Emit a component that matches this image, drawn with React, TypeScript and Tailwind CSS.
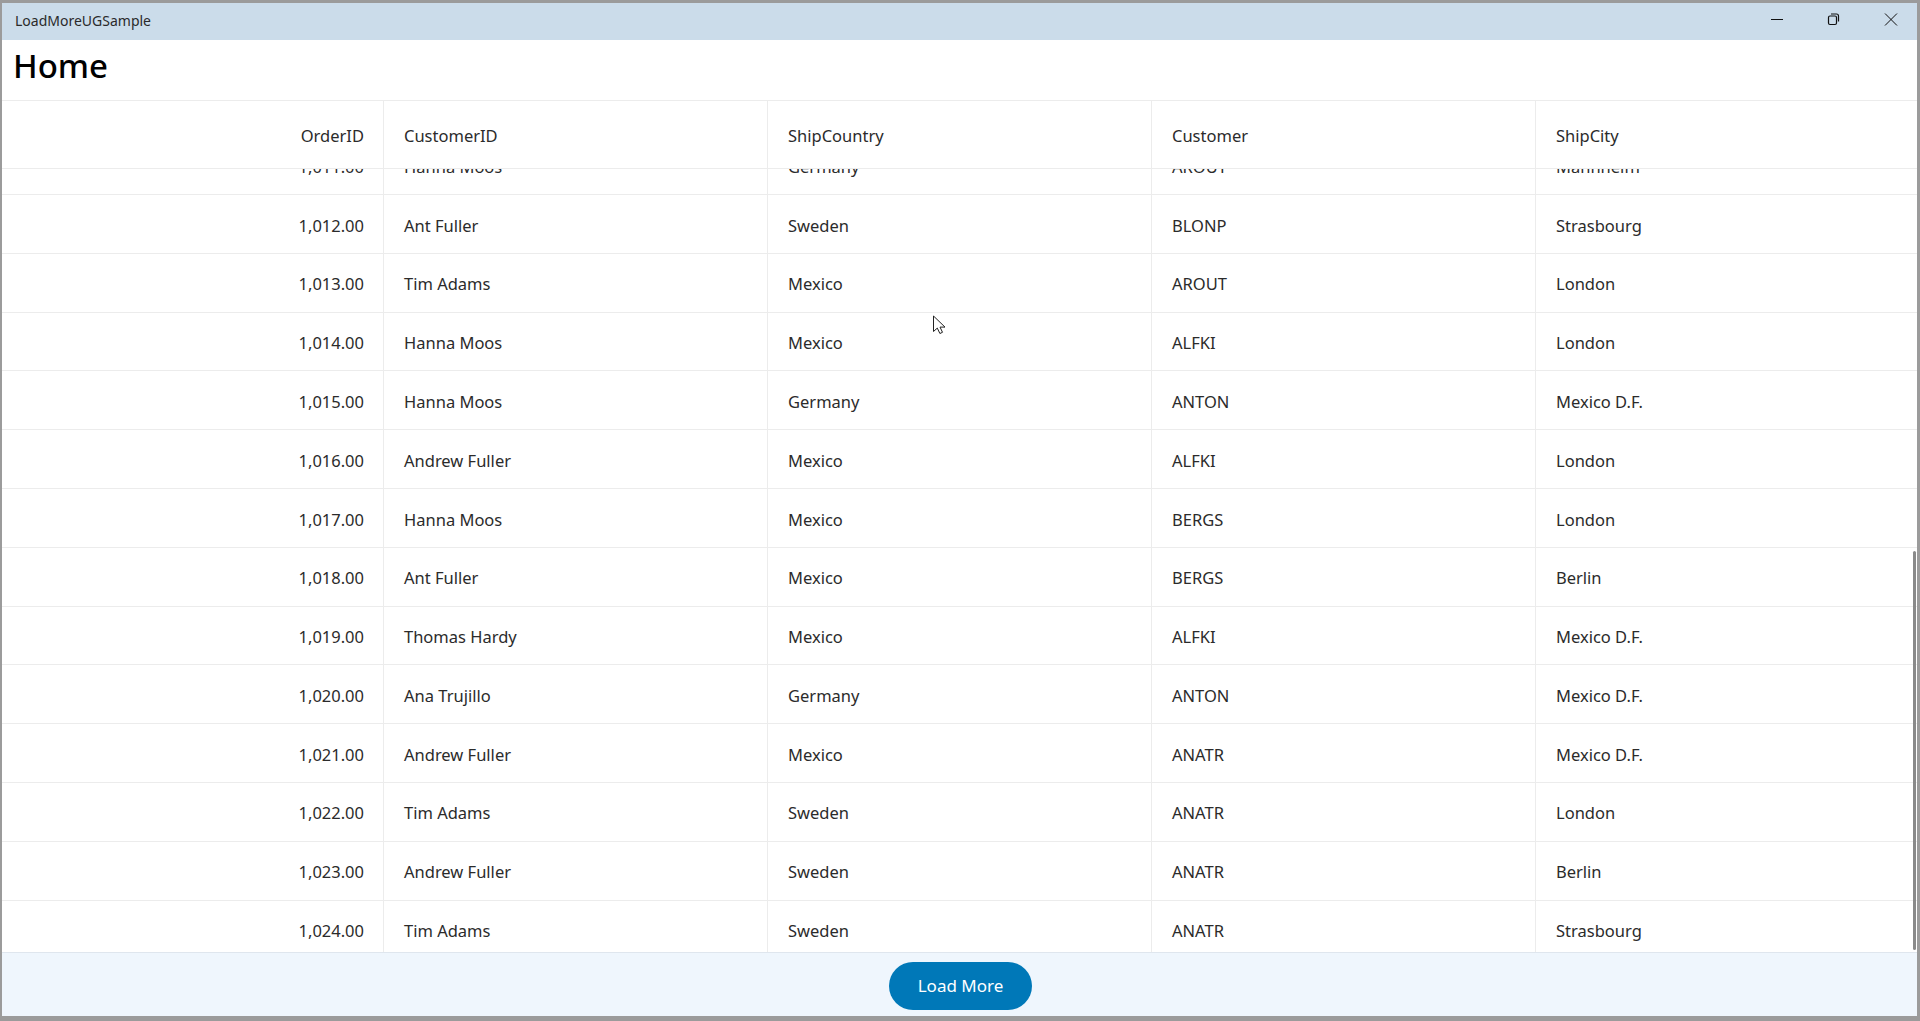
import React from 'react';

const rows = [
  ['1,011.00', 'Hanna Moos', 'Germany', 'AROUT', 'Mannheim'],
  ['1,012.00', 'Ant Fuller', 'Sweden', 'BLONP', 'Strasbourg'],
  ['1,013.00', 'Tim Adams', 'Mexico', 'AROUT', 'London'],
  ['1,014.00', 'Hanna Moos', 'Mexico', 'ALFKI', 'London'],
  ['1,015.00', 'Hanna Moos', 'Germany', 'ANTON', 'Mexico D.F.'],
  ['1,016.00', 'Andrew Fuller', 'Mexico', 'ALFKI', 'London'],
  ['1,017.00', 'Hanna Moos', 'Mexico', 'BERGS', 'London'],
  ['1,018.00', 'Ant Fuller', 'Mexico', 'BERGS', 'Berlin'],
  ['1,019.00', 'Thomas Hardy', 'Mexico', 'ALFKI', 'Mexico D.F.'],
  ['1,020.00', 'Ana Trujillo', 'Germany', 'ANTON', 'Mexico D.F.'],
  ['1,021.00', 'Andrew Fuller', 'Mexico', 'ANATR', 'Mexico D.F.'],
  ['1,022.00', 'Tim Adams', 'Sweden', 'ANATR', 'London'],
  ['1,023.00', 'Andrew Fuller', 'Sweden', 'ANATR', 'Berlin'],
  ['1,024.00', 'Tim Adams', 'Sweden', 'ANATR', 'Strasbourg'],
];

const headers = ['OrderID', 'CustomerID', 'ShipCountry', 'Customer', 'ShipCity'];

const Row: React.FC<{ cells: string[]; header?: boolean }> = ({ cells, header }) => (
  <div
    className={`grid grid-cols-[382px_384px_384px_384px_1fr] border-b border-[#ececec] shrink-0 ${
      header ? 'h-[68px]' : 'h-[58.8px]'
    }`}
  >
    {cells.map((c, i) => (
      <div
        key={i}
        className={`flex items-center pt-[4px] ${i === 0 ? 'justify-end pr-[19px]' : 'pl-5'} ${
          i < 4 ? 'border-r border-[#ececec]' : ''
        }`}
      >
        {c}
      </div>
    ))}
  </div>
);

export default function App() {
  return (
    <div className="w-[1920px] h-[1021px] overflow-hidden bg-[#9b9b9b] pt-[3px] pl-[2px] pr-[3px] pb-[5px] font-['Noto_Sans',sans-serif] text-[16.5px] text-[#2b2b2b]">
      <div className="h-full flex flex-col bg-white">
        <div className="h-[37px] shrink-0 bg-[#cbdcea] flex items-center justify-between">
          <span className="pl-[13px] pb-[2px] text-[14px] text-[#2a2a2a]">LoadMoreUGSample</span>
          <div className="flex items-center gap-[33px] pr-[14px] pb-[5px]">
            <svg width="24" height="24" viewBox="0 0 24 24" fill="none" stroke="#111" strokeWidth="1">
              <path d="M6 12.5h12" />
            </svg>
            <svg width="24" height="24" viewBox="0 0 24 24" fill="none" stroke="#111" strokeWidth="1.2">
              <rect x="6.5" y="9" width="8" height="8.5" rx="1.5" />
              <path d="M9 7h5.5a2 2 0 0 1 2 2v5.5" />
            </svg>
            <svg width="24" height="24" viewBox="0 0 24 24" fill="none" stroke="#111" strokeWidth="1">
              <path d="M6 6.5l12 12M18 6.5l-12 12" />
            </svg>
          </div>
        </div>
        <div className="h-[61px] shrink-0 border-b border-[#ececec] flex items-center pl-[11px] pb-[8px]">
          <h1 className="text-[33px] font-medium text-black">Home</h1>
        </div>
        <Row cells={headers} header />
        <div className="relative flex-1 min-h-0 overflow-hidden">
          <div className="flex flex-col -mt-[32.8px]">
            {rows.map((r) => (
              <Row key={r[0]} cells={r} />
            ))}
          </div>
          <div className="absolute right-[1px] top-[382px] bottom-[2px] w-[3px] rounded-full bg-[#8a8a8a]" />
          <svg className="absolute left-[930px] top-[146px]" width="16" height="22" viewBox="0 0 16 22">
            <path d="M1.5 1v15.5l3.8-3.4 2.6 5.4 2.6-1.2-2.5-5.2h5z" fill="#fff" stroke="#222" strokeWidth="1" strokeLinejoin="round" />
          </svg>
        </div>
        <div className="h-[64px] shrink-0 bg-[#eff6fd] border-t border-[#dfe6ee] flex items-center justify-center pt-[3px] pl-[2px]">
          <button className="w-[143px] h-[48px] rounded-full bg-[#0078b8] text-white text-[17px]">Load More</button>
        </div>
      </div>
    </div>
  );
}
